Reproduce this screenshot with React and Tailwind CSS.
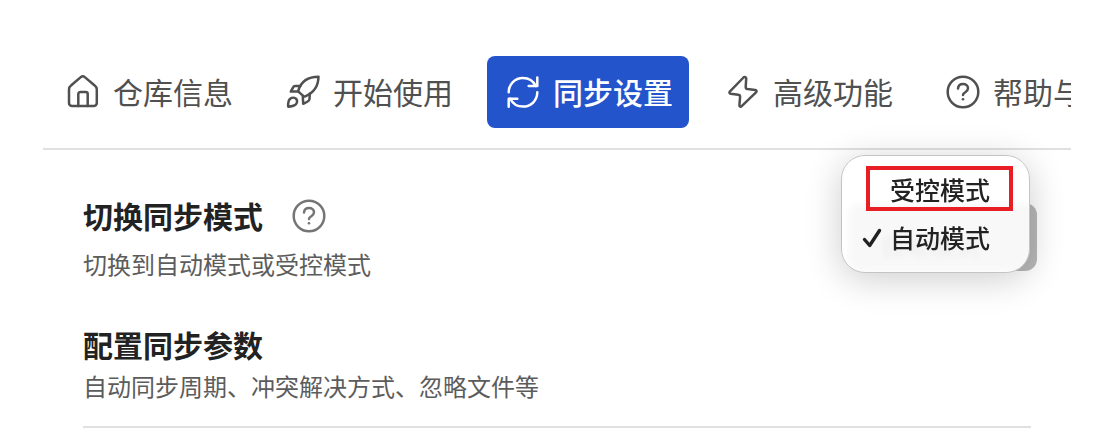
import { useState } from 'react';

const FONT = 'font-["Noto_Sans_CJK_SC",sans-serif]';

const Icon = ({ children, className = '' }) => (
  <svg
    viewBox="0 0 40 40"
    fill="none"
    stroke="currentColor"
    strokeWidth="2.5"
    strokeLinecap="round"
    strokeLinejoin="round"
    aria-hidden="true"
    className={`size-10 shrink-0 ${className}`}
  >
    {children}
  </svg>
);

const HomeIcon = () => (
  <Icon>
    <path d="M6 17.5c0-1.700.7-3 2-4L17.800 5.100a3 3 0 0 1 4 0l9.900 8.400c1.300 1 2.100 2.300 2.100 4V31a3 3 0 0 1-3 3H9a3 3 0 0 1-3-3Z" />
    <path d="M15.300 34V22a2 2 0 0 1 2-2h5.400a2 2 0 0 1 2 2v12" />
  </Icon>
);

const RocketIcon = () => (
  <Icon>
    <path d="M15.400 18.300C18 10 25 4.700 35.500 4.700 35.300 14 30 21 22.300 24.300c-.8.300-1.400.2-2-.4l-4.400-3.800c-.6-.5-.8-1.100-.5-1.800Z" />
    <path d="M17.300 14h-5.100c-1 0-1.700.4-2.100 1.300L7.800 19.600h7.500" />
    <path d="M19.800 24.500l.4 7.300 4.500-2.300c1.200-.6 1.700-1.300 1.800-2.500l.3-5.200" />
    <path d="M5.200 34.700c-.3-3.500.1-6.300 2-8 2-1.600 4.700-1.300 6 .2 1.500 1.700 1 4.400-.8 5.900-1.800 1.400-4.300 1.700-7.200 1.900Z" />
  </Icon>
);

const SyncIcon = () => (
  <Icon>
    <path d="M5.700 20.300C5.700 12 12 6 20 6c5.500 0 10.300 3 12.700 8" />
    <path d="M34.300 5.500V14h-8.600" />
    <path d="M34.300 20.300c0 8.200-6.300 14.300-14.300 14.300-5.500 0-10.300-3-12.700-7.900" />
    <path d="M5.700 34.700v-8h8.600" />
  </Icon>
);

const BoltIcon = () => (
  <Icon>
    <path d="M20.500 5.500 7 19.300c-1 1-.6 2.300.7 2.500l7.600.9c1.300.2 1.900.9 1.800 2.200l-.7 8.300c-.1 1.400 1.300 2 2.300 1L33 20.400c1-1 .6-2.300-.8-2.500l-7.700-.8c-1.300-.2-1.900-.9-1.800-2.200l.5-8.300c.1-1.500-1.600-2.200-2.700-1.100Z" />
  </Icon>
);

const HelpIcon = ({ className }) => (
  <Icon className={className}>
    <circle cx="20" cy="20" r="15.300" />
    <path d="M15 16.600c.2-2.700 2.200-4.600 5-4.600 2.900 0 5 1.700 5 4.300 0 2-1.300 3-2.700 3.900-1.500.9-2.300 1.600-2.300 2.800" />
    <circle cx="20" cy="27.300" r="1.300" fill="currentColor" stroke="none" />
  </Icon>
);

const tabs = [
  { id: 'info', label: '仓库信息', icon: HomeIcon },
  { id: 'start', label: '开始使用', icon: RocketIcon },
  { id: 'sync', label: '同步设置', icon: SyncIcon },
  { id: 'advanced', label: '高级功能', icon: BoltIcon },
  { id: 'help', label: '帮助与', icon: HelpIcon },
];

const modes = ['受控模式', '自动模式'];

const Tabs = ({ active, onChange }) => (
  <nav className="flex gap-[18px] overflow-hidden border-b-2 border-[#e0e0e0] pb-5 pl-1">
    {tabs.map(({ id, label, icon: TabIcon }) => (
      <button
        key={id}
        type="button"
        onClick={() => onChange(id)}
        className={`flex h-[72px] shrink-0 items-center gap-[10px] rounded-lg px-4 text-[30px] whitespace-nowrap ${
          active === id ? 'bg-[#2454cc] font-medium text-white' : 'text-[#505050]'
        }`}
      >
        <TabIcon />
        <span className="pb-0.5 leading-10">{label}</span>
      </button>
    ))}
  </nav>
);

const ModeSelect = ({ mode, onChange }) => (
  <div className="relative -mr-1.5 mt-[7px] shrink-0">
    <select
      aria-label="切换同步模式"
      value={mode}
      onChange={(e) => onChange(e.target.value)}
      className="block h-[68px] w-[189px] appearance-none rounded-xl bg-[#b8b8b8] pt-4 pl-8 text-[25px] text-[#333]"
    >
      {modes.map((m) => (
        <option key={m}>{m}</option>
      ))}
    </select>

    {/* Open menu */}
    <div
      role="listbox"
      aria-label="同步模式"
      className="absolute -top-12 right-[7px] w-[189px] rounded-3xl border border-[#c4c4c4] bg-white/90 py-[10px] shadow-[0_6px_36px_rgba(0,0,0,0.2)] backdrop-blur-[3px]"
    >
      {modes.map((m) => (
        <button
          key={m}
          type="button"
          role="option"
          aria-selected={m === mode}
          onClick={() => onChange(m)}
          className="flex h-12 w-full items-center pl-5 text-[25px] font-medium text-[#222]"
        >
          <span className="w-7">
            {m === mode && (
              <svg viewBox="0 0 20 20" fill="none" stroke="currentColor" strokeWidth="3.400" strokeLinecap="round" strokeLinejoin="round" aria-hidden="true" className="size-5">
                <path d="m2.500 11.500 5.200 6L17.500 2.500" />
              </svg>
            )}
          </span>
          <span className="pb-0.5 leading-8">{m}</span>
        </button>
      ))}
      <div className="pointer-events-none absolute top-[10px] left-6 h-[45px] w-[147px] border-4 border-[#e81e25]" />
    </div>
  </div>
);

const App = () => {
  const [tab, setTab] = useState('sync');
  const [mode, setMode] = useState('自动模式');

  return (
    <div className={`min-h-screen bg-white pt-14 pr-[31px] pl-[43px] ${FONT}`}>
      <Tabs active={tab} onChange={setTab} />

      <main className="px-10 pt-[46px]">
        <section className="flex items-start justify-between">
          <div>
            <div className="flex items-center gap-[26px]">
              <h2 className="pb-0.5 text-[30px] leading-9 font-bold text-[#222]">切换同步模式</h2>
              <button type="button" aria-label="帮助" className="text-[#757575]">
                <HelpIcon />
              </button>
            </div>
            <p className="mt-3 text-[24px] leading-8 text-[#5c5c5c]">切换到自动模式或受控模式</p>
          </div>
          <ModeSelect mode={mode} onChange={setMode} />
        </section>

        <section className="mt-[46px] border-b-2 border-[#e0e0e0] pb-6">
          <h2 className="text-[30px] leading-9 font-bold text-[#222]">配置同步参数</h2>
          <p className="mt-2 text-[24px] leading-8 text-[#5c5c5c]">自动同步周期、冲突解决方式、忽略文件等</p>
        </section>
      </main>
    </div>
  );
};

export default App;
